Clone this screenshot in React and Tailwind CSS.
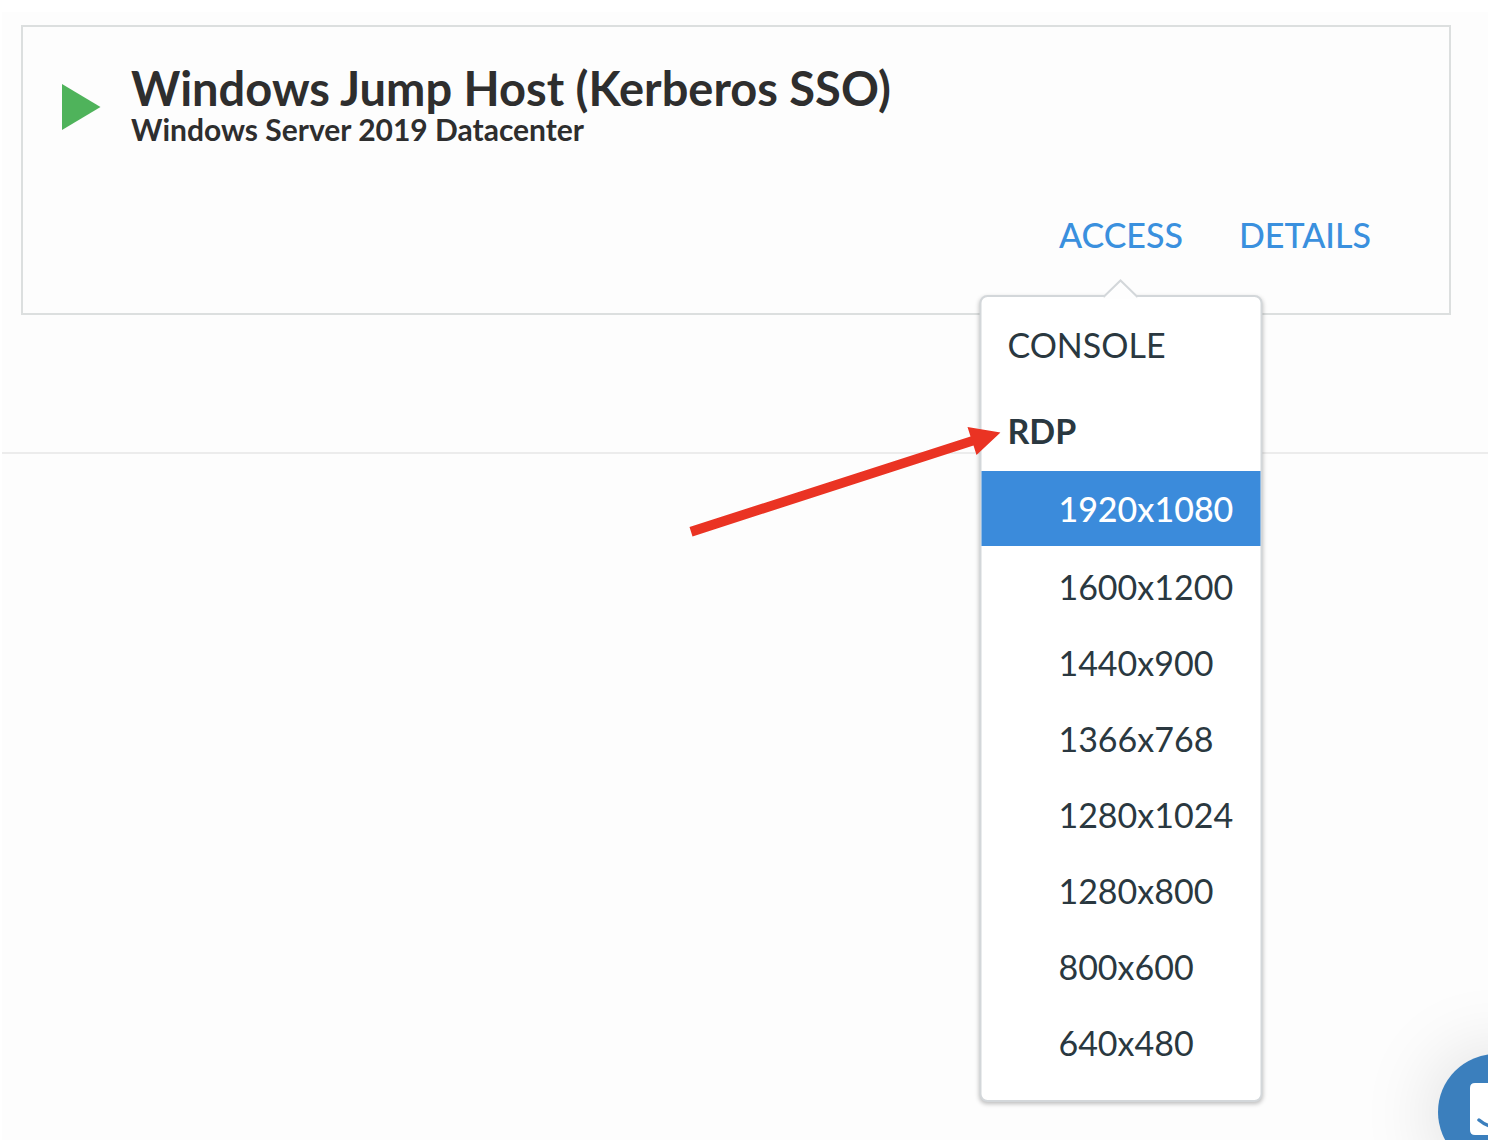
const RESOLUTIONS = [
  "1920x1080",
  "1600x1200",
  "1440x900",
  "1366x768",
  "1280x1024",
  "1280x800",
  "800x600",
  "640x480",
];

function PlayIcon() {
  return (
    <svg viewBox="0 0 40 46" className="mt-1.5 h-[46px] w-10 shrink-0" role="img" aria-label="Running">
      <path d="M1 0 39.500 23 1 46Z" fill="#4fb35b" />
    </svg>
  );
}

function PointerArrow() {
  return (
    <svg
      viewBox="0 0 312 112"
      className="pointer-events-none absolute top-[35px] right-[260px] h-28 w-[312px]"
      aria-hidden="true"
    >
      <path d="M1 101 282 10.500 279 1 312 6.500 288 29 285 19.500 4 110.500Z" fill="#ea3323" />
    </svg>
  );
}

function AccessMenu() {
  return (
    <div className="absolute top-full left-1/2 z-10 mt-10 w-[283px] -translate-x-1/2 rounded-lg border-2 border-[#d3d7da] bg-white pt-2 pb-5 text-[#2a3840] shadow-[0_2px_4px_rgba(0,0,0,0.25)]">
      <svg
        viewBox="0 0 36 20"
        className="absolute -top-[18px] left-1/2 h-5 w-9 -translate-x-1/2"
        aria-hidden="true"
      >
        <path d="M1 18 18 1.500 35 18V20H1Z" fill="#fefefe" />
        <path d="M1 18 18 1.500 35 18" fill="none" stroke="#d3d7da" strokeWidth="2" />
      </svg>
      <ul>
        <li className="mb-1.5">
          <button type="button" className="flex h-20 w-full items-center px-[26px]">
            CONSOLE
          </button>
        </li>
        <li>
          <div className="relative flex h-20 items-center px-[26px] font-bold">
            RDP
            <PointerArrow />
          </div>
          <ul className="flex flex-col gap-px">
            {RESOLUTIONS.map((size, i) => (
              <li key={size} className={i === 0 ? "mb-0.5" : ""}>
                <button
                  type="button"
                  className={
                    i === 0
                      ? "flex h-[75px] w-full items-center bg-[#3b8bdb] pl-[77px] font-medium text-white"
                      : "flex h-[75px] w-full items-center pl-[77px]"
                  }
                >
                  {size}
                </button>
              </li>
            ))}
          </ul>
        </li>
      </ul>
    </div>
  );
}

function ChatLauncher() {
  return (
    <button
      type="button"
      aria-label="Open chat"
      className="absolute -right-[66px] -bottom-[30px] flex size-[116px] items-center justify-center rounded-full bg-[#3b7fbd] shadow-[0_2px_80px_rgba(0,0,0,0.15)]"
    >
      <svg viewBox="0 0 52 60" className="h-[60px] w-[52px]" aria-hidden="true">
        <path d="M5 1H47Q52 1 52 6V60L40 53H5Q0 53 0 48V6Q0 1 5 1Z" fill="#fff" />
        <path d="M9 38Q26 52 43 38" fill="none" stroke="#3b7fbd" strokeWidth="3.500" strokeLinecap="round" />
      </svg>
    </button>
  );
}

export default function App() {
  return (
    <div className="flex min-h-screen flex-col bg-white pt-3 pb-1 pl-0.5 font-['Lato',sans-serif] text-[34px] leading-10">
      <main className="relative flex-1 overflow-hidden bg-[#fdfdfd]">
        <section className="mt-[13px] mr-[37px] ml-[19px] border-2 border-[#dcdfdf] pt-9 pr-[78px] pb-[58px] pl-[38px]">
          <div className="flex items-center gap-[30px] text-[#2e2e2e]">
            <PlayIcon />
            <div className="font-bold">
              <h1 className="text-[47px] leading-[50px]">Windows Jump Host (Kerberos SSO)</h1>
              <p className="text-[30px] leading-8">Windows Server 2019 Datacenter</p>
            </div>
          </div>
          <div className="mt-[70px] flex justify-end gap-14 font-medium text-[#3a90de]">
            <div className="relative">
              <button type="button" aria-haspopup="true" aria-expanded="true" className="block font-medium">
                ACCESS
              </button>
              <div className="font-normal">
                <AccessMenu />
              </div>
            </div>
            <a href="#details">DETAILS</a>
          </div>
        </section>
        <hr className="mt-[137px] border-t-2 border-[#ececec]" />
        <ChatLauncher />
      </main>
    </div>
  );
}
